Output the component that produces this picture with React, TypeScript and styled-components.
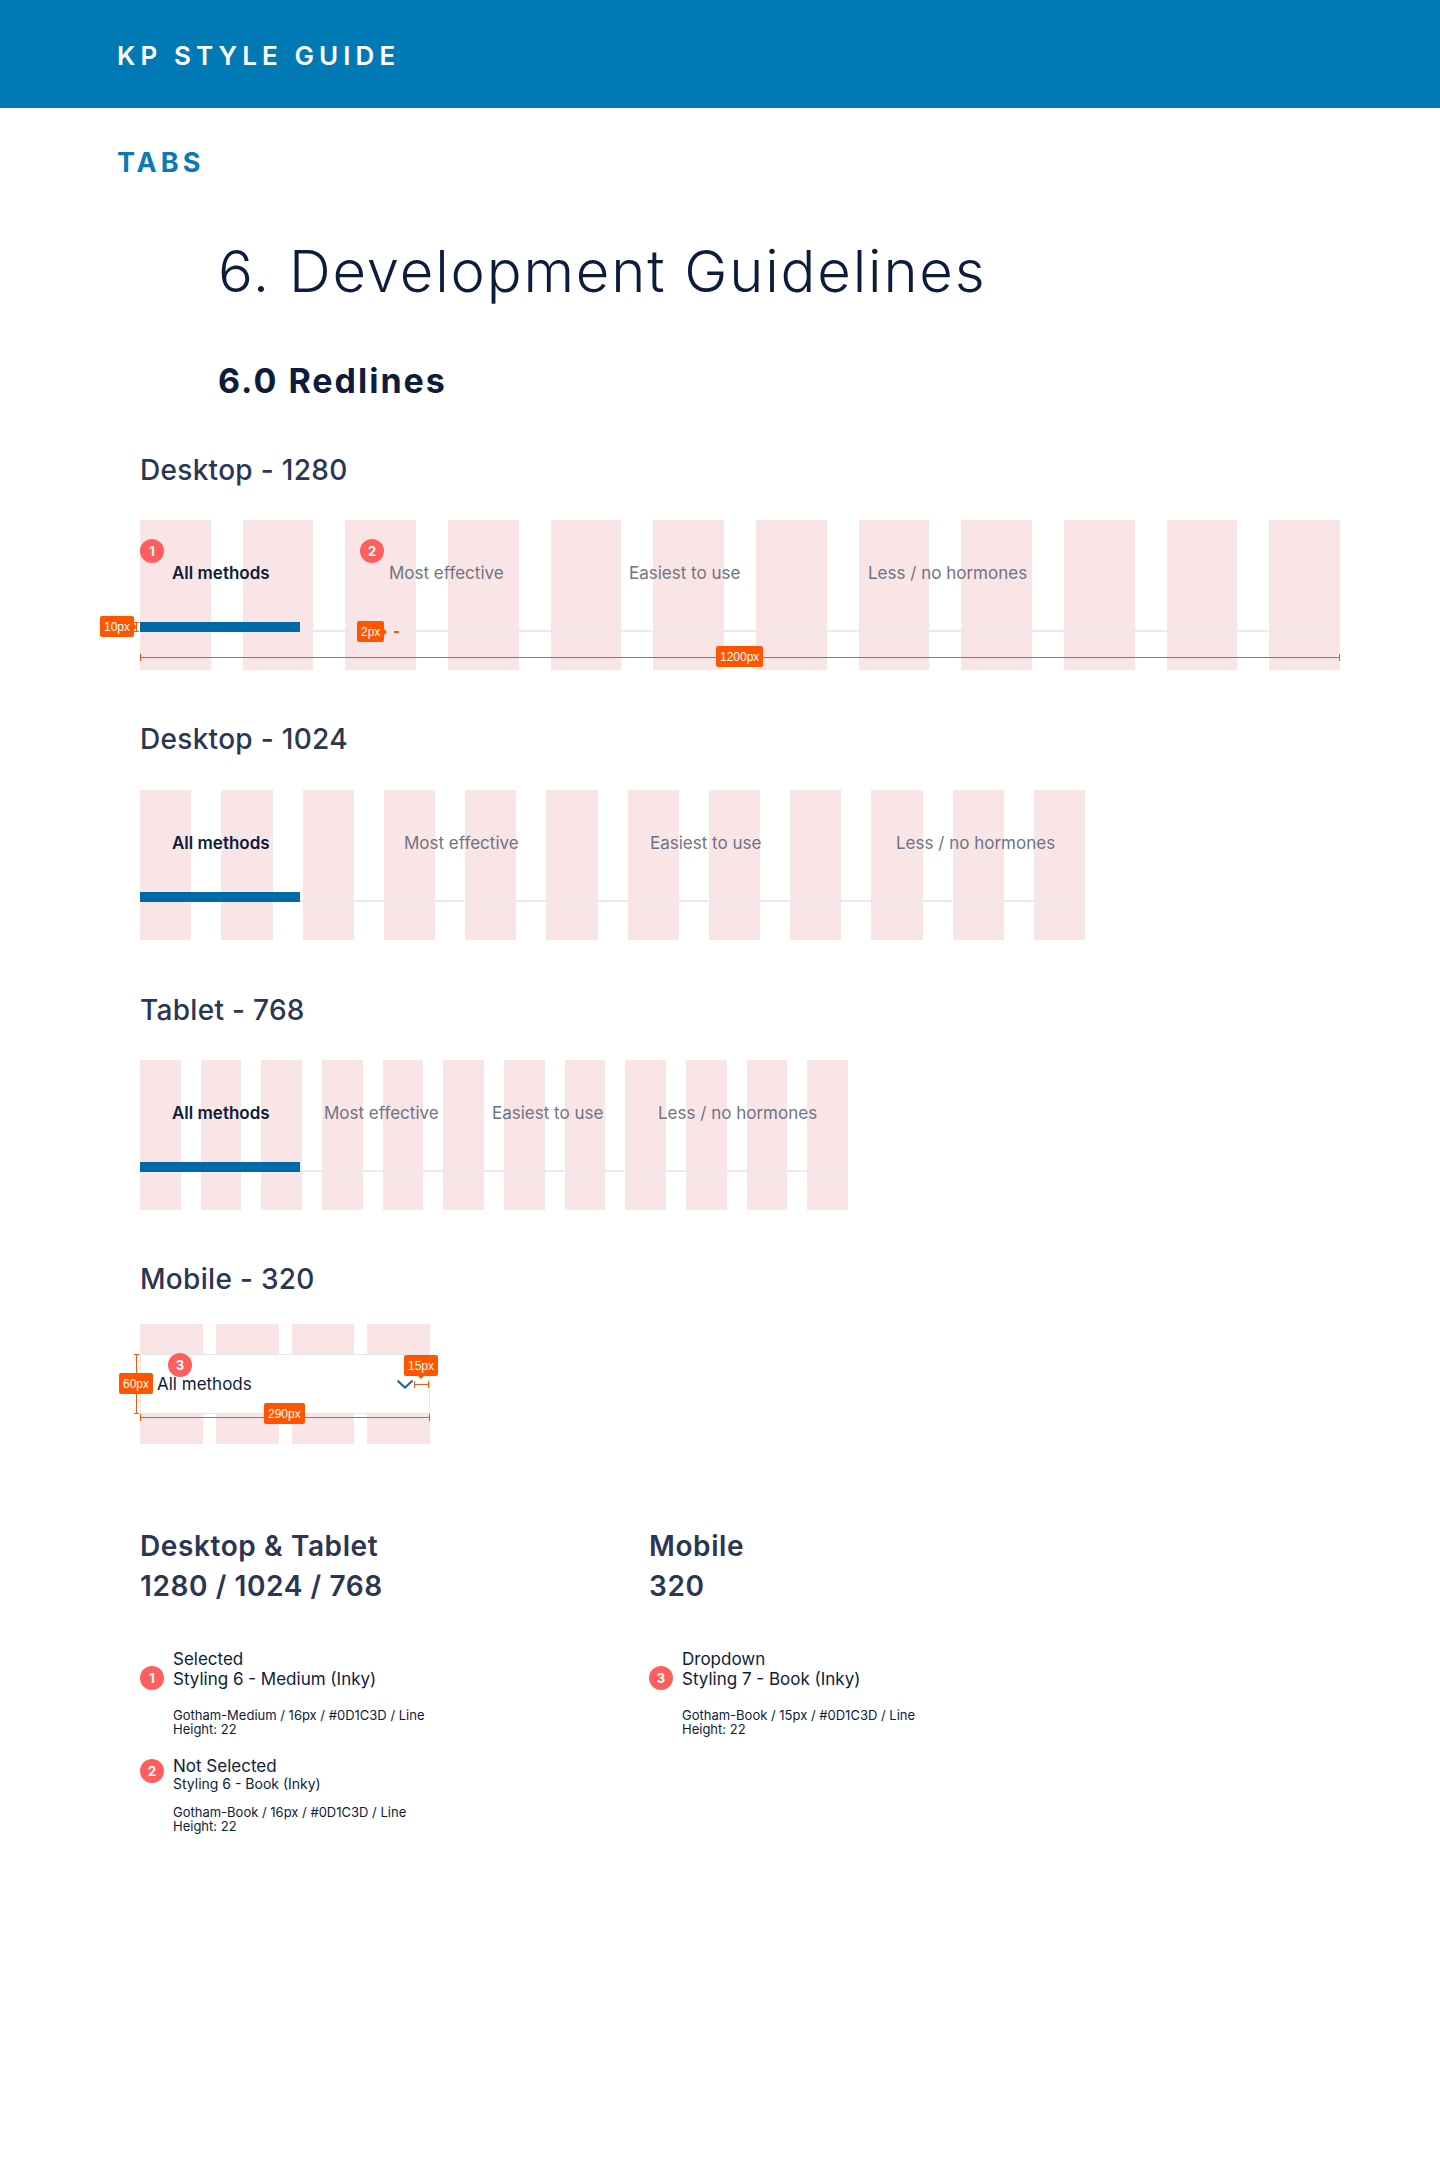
import React from 'react';
import styled, { createGlobalStyle } from 'styled-components';

const INK = '#0d1c3d';
const SLATE = '#2b3654';
const MUTED = '#6e7487';
const PINK = '#f9e5e6';
const RED = '#ff5e5e';
const ORANGE = '#ff5500';
const BLUE = '#0069a7';
const RAIL = '#e9e9ef';

const GlobalStyle = createGlobalStyle`
	body {
		margin: 0;
		background: #fff;
		font-family: Inter, 'Liberation Sans', sans-serif;
		color: ${INK};
	}
`;

const Page = styled.div`
	min-height: 2160px;
	background: #fff;
`;

const TopBar = styled.header`
	height: 108px;
	box-sizing: border-box;
	padding: 43px 0 0 117px;
	background: #0079b5;
`;

const Brand = styled.div`
	font-size: 26px;
	line-height: 26px;
	font-weight: 600;
	letter-spacing: 5.1px;
	color: #fff;
`;

const Kicker = styled.div`
	margin: 41px 0 0 117px;
	font-size: 27px;
	line-height: 27px;
	font-weight: 700;
	letter-spacing: 4px;
	color: #0a7ab7;
`;

const TitleBlock = styled.div`
	padding-left: 218px;
`;

const PageTitle = styled.h1`
	margin: 66px 0 0;
	font-size: 58px;
	line-height: 58px;
	font-weight: 300;
	letter-spacing: 1.8px;
	color: ${INK};
`;

const SubTitle = styled.h2`
	margin: 64px 0 0;
	font-size: 34px;
	line-height: 33px;
	font-weight: 700;
	letter-spacing: 2px;
	color: ${INK};
`;

const Specs = styled.div`
	padding-left: 140px;
`;

const SpecTitle = styled.h3<{ $gap: number }>`
	margin: ${p => p.$gap}px 0 0;
	font-size: 28px;
	line-height: 28px;
	font-weight: 500;
	letter-spacing: 0.3px;
	color: ${SLATE};
`;

const Frame = styled.div<{ $w: number; $h: number; $gap: number }>`
	position: relative;
	display: grid;
	width: ${p => p.$w}px;
	height: ${p => p.$h}px;
	margin-top: ${p => p.$gap}px;
`;

const Columns = styled.div<{ $n: number; $gap: number }>`
	grid-area: 1 / 1;
	display: grid;
	grid-template-columns: repeat(${p => p.$n}, 1fr);
	column-gap: ${p => p.$gap}px;
`;

const Col = styled.div`
	background: ${PINK};
`;

const TabLayer = styled.div`
	grid-area: 1 / 1;
	display: flex;
	flex-direction: column;
	padding-top: 42px;
`;

const TabRow = styled.div`
	display: flex;
	height: 22px;
	padding-left: 32px;
`;

const Tab = styled.span<{ $w?: number; $active?: boolean }>`
	flex: 0 0 ${p => (p.$w ? `${p.$w}px` : 'auto')};
	font-size: 17px;
	line-height: 22px;
	white-space: nowrap;
	font-weight: ${p => (p.$active ? 600 : 400)};
	color: ${p => (p.$active ? INK : MUTED)};
`;

const Track = styled.div`
	display: flex;
	align-items: flex-end;
	height: 10px;
	margin-top: 38px;
`;

const ActiveBar = styled.div`
	width: 160px;
	height: 10px;
	background: ${BLUE};
`;

const Rail = styled.div`
	flex: 1;
	height: 2px;
	background: ${RAIL};
`;

const DropLayer = styled.div`
	grid-area: 1 / 1;
	padding-top: 30px;
`;

const Dropdown = styled.div`
	display: flex;
	align-items: center;
	justify-content: space-between;
	box-sizing: border-box;
	height: 60px;
	padding: 0 16px;
	background: #fff;
	border: 1px solid #e6e7ec;
	font-size: 17px;
	color: ${INK};
`;

/* redline annotations sit on top of the frames */
const Pin = styled.div<{ $x: number; $y: number }>`
	position: absolute;
	left: ${p => p.$x}px;
	top: ${p => p.$y}px;
	display: flex;
`;

const Badge = styled.span`
	display: inline-flex;
	align-items: center;
	justify-content: center;
	width: 24px;
	height: 24px;
	border-radius: 50%;
	background: ${RED};
	color: #fff;
	font-size: 13px;
	font-weight: 700;
	line-height: 1;
`;

const Tag = styled.span<{ $arrow?: 'right' | 'down' }>`
	position: relative;
	display: inline-flex;
	align-items: center;
	justify-content: center;
	height: 21px;
	padding: 0 4px;
	border-radius: 2px;
	background: ${ORANGE};
	color: #fff;
	font: 12px 'Liberation Sans', Arial, sans-serif;
	white-space: nowrap;

	&::after {
		content: '';
		position: absolute;
		display: ${p => (p.$arrow ? 'block' : 'none')};
		border: 3px solid transparent;
		${p =>
			p.$arrow === 'down'
				? `left: 50%; bottom: -6px; margin-left: -3px; border-top-color: ${ORANGE};`
				: `right: -6px; top: 50%; margin-top: -3px; border-left-color: ${ORANGE};`}
	}
`;

const HRule = styled.div<{ $w: number }>`
	position: relative;
	width: ${p => p.$w}px;
	height: 1px;
	background: ${ORANGE};

	&::before,
	&::after {
		content: '';
		position: absolute;
		top: -3px;
		width: 1px;
		height: 7px;
		background: ${ORANGE};
	}
	&::before { left: 0; }
	&::after { right: 0; }
`;

const VRule = styled.div<{ $h: number }>`
	position: relative;
	width: 1px;
	height: ${p => p.$h}px;
	background: ${ORANGE};
	margin-left: 2px;

	&::before,
	&::after {
		content: '';
		position: absolute;
		left: -2px;
		width: 5px;
		height: 1px;
		background: ${ORANGE};
	}
	&::before { top: 0; }
	&::after { bottom: 0; }
`;

const Dash = styled.div`
	width: 5px;
	height: 2px;
	background: ${ORANGE};
`;

const Legend = styled.section`
	display: grid;
	grid-template-columns: 509px 1fr;
	margin-top: 82px;
	padding-left: 140px;
`;

const LegendColumn = styled.div`
	display: flex;
	flex-direction: column;
`;

const LegendHeading = styled.h4`
	margin: 0 0 43px;
	font-size: 28px;
	line-height: 40px;
	font-weight: 600;
	letter-spacing: 0.6px;
	color: ${SLATE};
`;

const Item = styled.div<{ $gap?: number }>`
	display: grid;
	grid-template-columns: 24px 1fr;
	column-gap: 9px;
	margin-top: ${p => p.$gap ?? 0}px;
`;

const ItemBadge = styled(Badge)<{ $offset: number }>`
	margin-top: ${p => p.$offset}px;
`;

const ItemText = styled.div`
	display: flex;
	flex-direction: column;
	color: ${INK};
`;

const Line = styled.span<{ $small?: boolean }>`
	font-size: ${p => (p.$small ? 14 : 17)}px;
	line-height: ${p => (p.$small ? 16 : 20)}px;
`;

const Note = styled.p<{ $gap: number }>`
	margin: ${p => p.$gap}px 0 0;
	font-size: 13px;
	line-height: 14px;
	color: ${INK};
`;

const Chevron = () => (
	<svg width="16" height="9" viewBox="0 0 16 9" fill="none">
		<path d="M1.2 1.2 L8 7.6 L14.8 1.2" stroke="#1b6ea8" strokeWidth="2.2" strokeLinecap="round" strokeLinejoin="round" />
	</svg>
);

const LABELS = ['All methods', 'Most effective', 'Easiest to use', 'Less / no hormones'];

type Layout = {
	title: string;
	width: number;
	gap: number;
	tabs: number[];
	titleGap: number;
	frameGap: number;
	notes?: boolean;
};

const LAYOUTS: Layout[] = [
	{ title: 'Desktop - 1280', width: 1200, gap: 32, tabs: [217, 240, 239], titleGap: 59, frameGap: 36, notes: true },
	{ title: 'Desktop - 1024', width: 945, gap: 30, tabs: [232, 246, 246], titleGap: 55, frameGap: 37 },
	{ title: 'Tablet - 768', width: 708, gap: 20, tabs: [152, 168, 166], titleGap: 56, frameGap: 36 },
];

const TabsFrame = ({ layout }: { layout: Layout }) => (
	<Frame $w={layout.width} $h={150} $gap={layout.frameGap}>
		<Columns $n={12} $gap={layout.gap}>
			{Array.from({ length: 12 }).map((_, i) => <Col key={i} />)}
		</Columns>
		<TabLayer>
			<TabRow>
				{LABELS.map((label, i) => (
					<Tab key={label} $w={layout.tabs[i]} $active={i === 0}>{label}</Tab>
				))}
			</TabRow>
			<Track>
				<ActiveBar />
				<Rail />
			</Track>
		</TabLayer>
		{layout.notes && (
			<>
				<Pin $x={0} $y={19}><Badge>1</Badge></Pin>
				<Pin $x={220} $y={19}><Badge>2</Badge></Pin>
				<Pin $x={-40} $y={96}><Tag $arrow="right">10px</Tag></Pin>
				<Pin $x={-6} $y={102}><VRule $h={10} /></Pin>
				<Pin $x={217} $y={101}><Tag $arrow="right">2px</Tag></Pin>
				<Pin $x={254} $y={111}><Dash /></Pin>
				<Pin $x={0} $y={137}><HRule $w={1200} /></Pin>
				<Pin $x={576} $y={126}><Tag>1200px</Tag></Pin>
			</>
		)}
	</Frame>
);

const MobileFrame = () => (
	<Frame $w={290} $h={120} $gap={31}>
		<Columns $n={4} $gap={13}>
			{Array.from({ length: 4 }).map((_, i) => <Col key={i} />)}
		</Columns>
		<DropLayer>
			<Dropdown>
				<span>All methods</span>
				<Chevron />
			</Dropdown>
		</DropLayer>
		<Pin $x={28} $y={29}><Badge>3</Badge></Pin>
		<Pin $x={-6} $y={30}><VRule $h={60} /></Pin>
		<Pin $x={-21} $y={49}><Tag>60px</Tag></Pin>
		<Pin $x={264} $y={31}><Tag $arrow="down">15px</Tag></Pin>
		<Pin $x={274} $y={60}><HRule $w={15} /></Pin>
		<Pin $x={0} $y={93}><HRule $w={290} /></Pin>
		<Pin $x={124} $y={79}><Tag>290px</Tag></Pin>
	</Frame>
);

export default function App() {
	return (
		<Page>
			<GlobalStyle />
			<TopBar>
				<Brand>KP STYLE GUIDE</Brand>
			</TopBar>
			<Kicker>TABS</Kicker>
			<TitleBlock>
				<PageTitle>6. Development Guidelines</PageTitle>
				<SubTitle>6.0 Redlines</SubTitle>
			</TitleBlock>
			<Specs>
				{LAYOUTS.map(layout => (
					<React.Fragment key={layout.title}>
						<SpecTitle $gap={layout.titleGap}>{layout.title}</SpecTitle>
						<TabsFrame layout={layout} />
					</React.Fragment>
				))}
				<SpecTitle $gap={55}>Mobile - 320</SpecTitle>
				<MobileFrame />
			</Specs>
			<Legend>
				<LegendColumn>
					<LegendHeading>Desktop &amp; Tablet<br />1280 / 1024 / 768</LegendHeading>
					<Item>
						<ItemBadge $offset={17}>1</ItemBadge>
						<ItemText>
							<Line>Selected</Line>
							<Line>Styling 6 - Medium (Inky)</Line>
							<Note $gap={19}>Gotham-Medium / 16px / #0D1C3D / Line<br />Height: 22</Note>
						</ItemText>
					</Item>
					<Item $gap={20}>
						<ItemBadge $offset={3}>2</ItemBadge>
						<ItemText>
							<Line>Not Selected</Line>
							<Line $small>Styling 6 - Book (Inky)</Line>
							<Note $gap={13}>Gotham-Book / 16px / #0D1C3D / Line<br />Height: 22</Note>
						</ItemText>
					</Item>
				</LegendColumn>
				<LegendColumn>
					<LegendHeading>Mobile<br />320</LegendHeading>
					<Item>
						<ItemBadge $offset={17}>3</ItemBadge>
						<ItemText>
							<Line>Dropdown</Line>
							<Line>Styling 7 - Book (Inky)</Line>
							<Note $gap={19}>Gotham-Book / 15px / #0D1C3D / Line<br />Height: 22</Note>
						</ItemText>
					</Item>
				</LegendColumn>
			</Legend>
		</Page>
	);
}
